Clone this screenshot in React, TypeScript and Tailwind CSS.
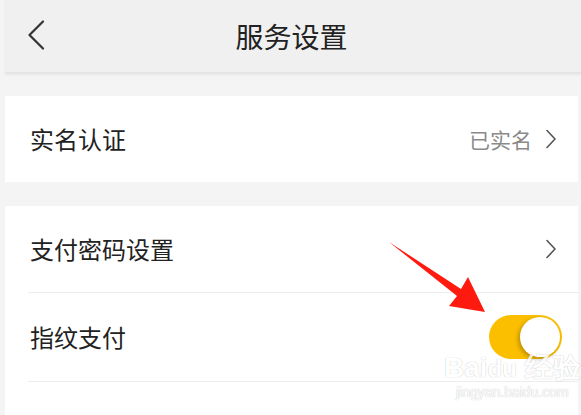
import React from "react";

const font = { fontFamily: '"Noto Sans CJK SC", "Noto Sans", sans-serif' };

function Chevron() {
  return (
    <svg width="12" height="20" viewBox="0 0 12 20" fill="none">
      <path d="M2 1.5 L10 10 L2 18.5" stroke="#555" strokeWidth="1.6" strokeLinecap="round" strokeLinejoin="round" />
    </svg>
  );
}

export default function App() {
  return (
    <div className="relative w-[581px] h-[415px] overflow-hidden bg-[#f4f4f4] pl-[5px] flex flex-col" style={font}>
      {/* header */}
      <div className="relative h-[73px] shrink-0 bg-[#f0f0f0] flex items-center justify-center shadow-[0_2px_2px_rgba(0,0,0,0.06)] border-b border-[#e4e4e4]">
        <div className="absolute left-[22px] top-[20px]">
          <svg width="18" height="30" viewBox="0 0 18 30" fill="none">
            <path d="M16 1.5 L2.5 15 L16 28.5" stroke="#333" strokeWidth="2.2" strokeLinecap="round" strokeLinejoin="round" />
          </svg>
        </div>
        <span className="text-[28px] text-[#222] leading-none -ml-[3px]">服务设置</span>
      </div>

      <div className="pr-[3px] flex flex-col">
        <div className="mt-[23px] h-[86px] bg-white flex items-center pl-[25px] pr-[21px]">
          <span className="text-[24px] text-[#222] leading-none">实名认证</span>
          <span className="ml-auto text-[21px] text-[#8a8a8a] leading-none mr-[13px]">已实名</span>
          <Chevron />
        </div>

        <div className="mt-[24px] bg-white flex flex-col">
          <div className="h-[86px] flex items-center pl-[25px] pr-[21px]">
            <span className="text-[24px] text-[#222] leading-none">支付密码设置</span>
            <span className="ml-auto"><Chevron /></span>
          </div>
          <div className="ml-[23px] h-px bg-[#ececec]" />
          <div className="h-[88px] flex items-center pl-[25px] pr-[16px]">
            <span className="text-[24px] text-[#222] leading-none">指纹支付</span>
            <div className="ml-auto w-[73px] h-[44px] rounded-full bg-[#fbbf00] flex items-center justify-end pr-[2px]">
              <div className="w-[40px] h-[40px] rounded-full bg-white shadow-[-2px_2px_4px_rgba(0,0,0,0.25)]" />
            </div>
          </div>
          <div className="ml-[23px] h-px bg-[#ececec]" />
          <div className="h-[88px] flex items-center pl-[25px]">
            <span className="text-[24px] text-[#222] leading-none">小额免密支付</span>
          </div>
        </div>
      </div>

      {/* red arrow annotation */}
      <svg className="absolute left-0 top-0 pointer-events-none" width="581" height="415" viewBox="0 0 581 415">
        <polygon points="389,242 461,289 468,277 485,312 449,306 457,296" fill="#ff1a0f" />
      </svg>

      {/* watermark */}
      <div className="absolute left-[444px] top-[354px] flex flex-col items-center pointer-events-none opacity-80">
        <span className="text-[28px] font-bold leading-none text-white [text-shadow:0_0_1px_rgba(0,0,0,0.35)]" style={{ fontFamily: '"Liberation Sans", sans-serif' }}>Bai<span className="text-[24px]">du</span> 经验</span>
        <span className="text-[14px] leading-none mt-[3px] text-white [text-shadow:0_0_1px_rgba(0,0,0,0.4)]" style={{ fontFamily: '"Liberation Sans", sans-serif' }}>jingyan.baidu.com</span>
      </div>
    </div>
  );
}
